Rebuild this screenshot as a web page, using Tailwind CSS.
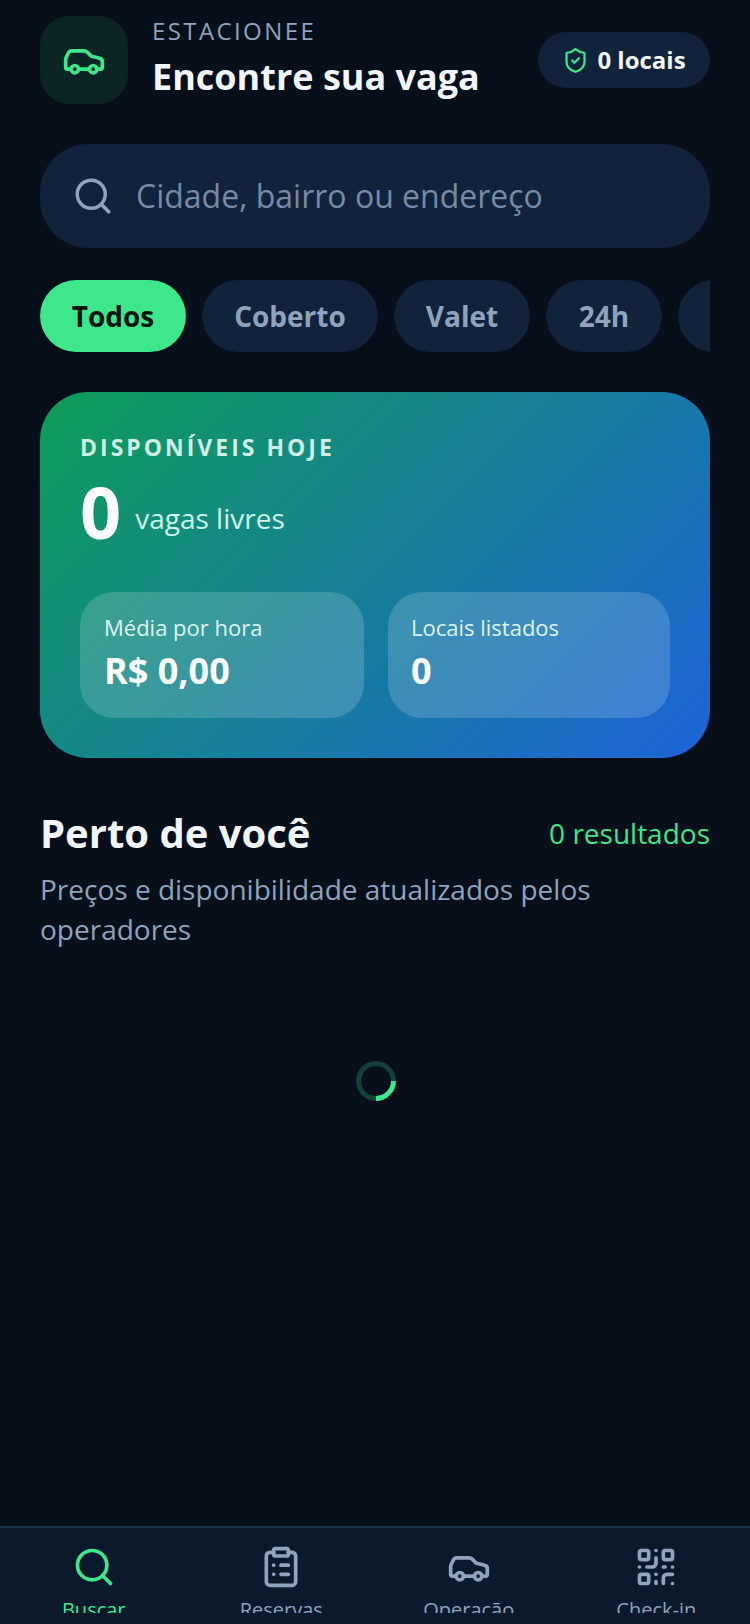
<!DOCTYPE html>
<html lang="pt-BR">
<head>
    <meta charset="UTF-8">
    <meta name="viewport" content="width=device-width, initial-scale=1.0">
    <script src="https://cdn.jsdelivr.net/npm/@tailwindcss/browser@4"></script>
    <title>Estacionee</title>
</head>
<body class="bg-[#060f1a] font-['Open_Sans',sans-serif]">
    <div class="h-[1624px] w-[750px] flex flex-col overflow-hidden">
        <main class="flex-1 px-10 pt-4">
            <!-- Header -->
            <header class="flex items-center h-[88px]">
                <div class="w-[88px] h-[88px] rounded-[30px] bg-[#0b2424] flex items-center justify-center shrink-0">
                    <svg class="w-[44px] h-[44px] text-[#3ee68c]" viewBox="0 0 24 24" fill="none" stroke="currentColor" stroke-width="2" stroke-linecap="round" stroke-linejoin="round">
                        <path d="M19 17h2c.6 0 1-.4 1-1v-3c0-.9-.7-1.7-1.5-1.9C18.7 10.6 16 10 16 10s-1.3-1.4-2.2-2.3c-.5-.4-1.1-.7-1.8-.7H5c-.6 0-1.1.4-1.4.9l-1.4 2.9A3.7 3.7 0 0 0 2 12v4c0 .6.4 1 1 1h2"/>
                        <circle cx="7" cy="17" r="2"/>
                        <path d="M9 17h6"/>
                        <circle cx="17" cy="17" r="2"/>
                    </svg>
                </div>
                <div class="ml-[24px] flex-1">
                    <p class="text-[24px] leading-[30px] tracking-[2.4px] text-[#8fa3bd] -mt-[3px]">ESTACIONEE</p>
                    <h1 class="text-[36px] leading-[48px] font-bold text-[#f1f6fc] mt-[7px]">Encontre sua vaga</h1>
                </div>
                <div class="h-[56px] w-[172px] rounded-full bg-[#10233a] flex items-center justify-center gap-[8px]">
                    <svg class="w-[27px] h-[27px] text-[#3ee68c]" viewBox="0 0 24 24" fill="none" stroke="currentColor" stroke-width="2" stroke-linecap="round" stroke-linejoin="round">
                        <path d="M20 13c0 5-3.5 7.5-7.66 8.95a1 1 0 0 1-.67-.01C7.5 20.5 4 18 4 13V6a1 1 0 0 1 1-1c2 0 4.5-1.2 6.24-2.72a1.17 1.17 0 0 1 1.52 0C14.51 3.81 17 5 19 5a1 1 0 0 1 1 1z"/>
                        <path d="m9 12 2 2 4-4"/>
                    </svg>
                    <span class="text-[24px] leading-none font-bold text-[#f1f6fc]">0 locais</span>
                </div>
            </header>

            <!-- Search -->
            <div class="mt-10 h-[104px] rounded-[48px] bg-[#10233a] flex items-center pl-[32px]">
                <svg class="w-[42px] h-[42px] text-[#8fa3bd]" viewBox="0 0 24 24" fill="none" stroke="currentColor" stroke-width="2" stroke-linecap="round" stroke-linejoin="round">
                    <circle cx="11" cy="11" r="8"/>
                    <path d="m21 21-4.3-4.3"/>
                </svg>
                <span class="ml-[22px] text-[32px] text-[#748aa6]">Cidade, bairro ou endereço</span>
            </div>

            <!-- Filters -->
            <div class="mt-8 flex gap-4 overflow-hidden">
                <button class="shrink-0 w-[146px] h-[72px] rounded-full bg-[#3ee68c] text-[28px] font-bold text-[#04140c]">Todos</button>
                <button class="shrink-0 w-[176px] h-[72px] rounded-full bg-[#10233a] text-[28px] font-bold text-[#8fa3bd]">Coberto</button>
                <button class="shrink-0 w-[136px] h-[72px] rounded-full bg-[#10233a] text-[28px] font-bold text-[#8fa3bd]">Valet</button>
                <button class="shrink-0 w-[116px] h-[72px] rounded-full bg-[#10233a] text-[28px] font-bold text-[#8fa3bd]">24h</button>
                <button class="shrink-0 w-[150px] h-[72px] rounded-full bg-[#10233a]"></button>
            </div>

            <!-- Summary card -->
            <section class="mt-10 h-[366px] rounded-[48px] bg-[linear-gradient(135deg,#0f9d58,#1d63d8)] p-10">
                <p class="text-[23px] leading-[32px] font-bold tracking-[3px] text-[#d0f0e6] -mt-px">DISPONÍVEIS HOJE</p>
                <div class="flex items-center mt-[9px] h-[78px]">
                    <span class="text-[72px] leading-[78px] font-bold text-white">0</span>
                    <span class="ml-[14px] mt-[14px] text-[28px] text-[#d0f5ea]">vagas livres</span>
                </div>
                <div class="grid grid-cols-[284px_282px] gap-[24px] mt-[42px]">
                    <div class="h-[126px] rounded-[34px] bg-white/16 px-6 pt-[20px]">
                        <p class="text-[22px] leading-[30px] text-[#dff5ef]">Média por hora</p>
                        <p class="text-[36px] leading-[46px] font-bold text-white mt-[6px]">R$ 0,00</p>
                    </div>
                    <div class="h-[126px] rounded-[34px] bg-white/16 pl-[23px] pr-6 pt-[20px]">
                        <p class="text-[22px] leading-[30px] text-[#dff5ef]">Locais listados</p>
                        <p class="text-[36px] leading-[46px] font-bold text-white mt-[6px]">0</p>
                    </div>
                </div>
            </section>

            <!-- Nearby -->
            <section class="mt-[49px]">
                <div class="flex items-center justify-between">
                    <h2 class="text-[40px] leading-[52px] font-bold text-[#f1f6fc]">Perto de você</h2>
                    <span class="text-[28px] text-[#3ee68c]">0 resultados</span>
                </div>
                <p class="mt-[10px] text-[28px] leading-[40px] text-[#8fa3bd]">Preços e disponibilidade atualizados pelos operadores</p>
            </section>

            <!-- Loading -->
            <div class="mt-[112px] pl-[2px] flex justify-center">
                <div class="w-10 h-10 rounded-full border-[5px] border-[#14403a] border-r-[#3ee68c] rotate-[45deg]"></div>
            </div>
        </main>

        <!-- Bottom nav -->
        <nav class="h-[98px] shrink-0 bg-[#0a1a2c] border-t-2 border-[#16304a] grid grid-cols-4 pt-[17px]">
            <div class="flex flex-col items-center h-[68px] overflow-hidden text-[#3ee68c]">
                <svg class="w-[44px] h-[44px] shrink-0" viewBox="0 0 24 24" fill="none" stroke="currentColor" stroke-width="2" stroke-linecap="round" stroke-linejoin="round"><circle cx="11" cy="11" r="8"/><path d="m21 21-4.3-4.3"/></svg>
                <span class="text-[20px] leading-[28px] mt-[7px]">Buscar</span>
            </div>
            <div class="flex flex-col items-center h-[68px] overflow-hidden text-[#8fa3bd]">
                <svg class="w-[44px] h-[44px] shrink-0" viewBox="0 0 24 24" fill="none" stroke="currentColor" stroke-width="2" stroke-linecap="round" stroke-linejoin="round"><rect x="8" y="2" width="8" height="4" rx="1"/><path d="M16 4h2a2 2 0 0 1 2 2v14a2 2 0 0 1-2 2H6a2 2 0 0 1-2-2V6a2 2 0 0 1 2-2h2"/><path d="M12 11h4"/><path d="M12 16h4"/><path d="M8 11h.01"/><path d="M8 16h.01"/></svg>
                <span class="text-[20px] leading-[28px] mt-[7px]">Reservas</span>
            </div>
            <div class="flex flex-col items-center h-[68px] overflow-hidden text-[#8fa3bd]">
                <svg class="w-[44px] h-[44px] shrink-0" viewBox="0 0 24 24" fill="none" stroke="currentColor" stroke-width="2" stroke-linecap="round" stroke-linejoin="round"><path d="M19 17h2c.6 0 1-.4 1-1v-3c0-.9-.7-1.7-1.5-1.9C18.7 10.6 16 10 16 10s-1.3-1.4-2.2-2.3c-.5-.4-1.1-.7-1.8-.7H5c-.6 0-1.1.4-1.4.9l-1.4 2.9A3.7 3.7 0 0 0 2 12v4c0 .6.4 1 1 1h2"/><circle cx="7" cy="17" r="2"/><path d="M9 17h6"/><circle cx="17" cy="17" r="2"/></svg>
                <span class="text-[20px] leading-[28px] mt-[7px]">Operação</span>
            </div>
            <div class="flex flex-col items-center h-[68px] overflow-hidden text-[#8fa3bd]">
                <svg class="w-[44px] h-[44px] shrink-0" viewBox="0 0 24 24" fill="none" stroke="currentColor" stroke-width="2" stroke-linecap="round" stroke-linejoin="round"><rect width="5" height="5" x="3" y="3" rx="1"/><rect width="5" height="5" x="16" y="3" rx="1"/><rect width="5" height="5" x="3" y="16" rx="1"/><path d="M21 16h-3a2 2 0 0 0-2 2v3"/><path d="M21 21v.01"/><path d="M12 7v3a2 2 0 0 1-2 2H7"/><path d="M3 12h.01"/><path d="M12 3h.01"/><path d="M12 16v.01"/><path d="M16 12h1"/><path d="M21 12v.01"/><path d="M12 21v-1"/></svg>
                <span class="text-[20px] leading-[28px] mt-[7px]">Check-in</span>
            </div>
        </nav>
    </div>
</body>
</html>
